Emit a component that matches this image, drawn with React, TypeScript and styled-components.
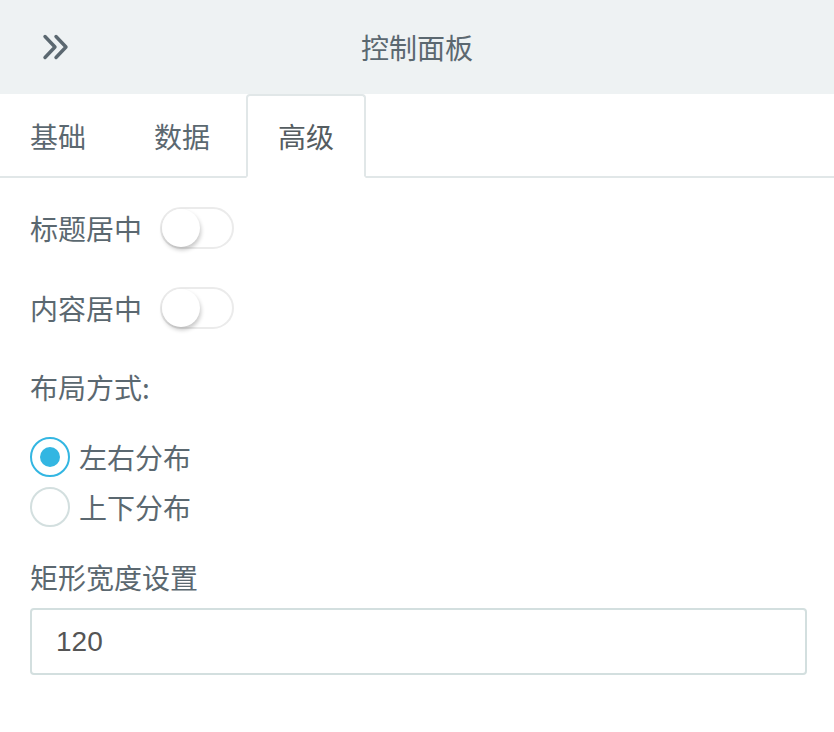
import styled, { createGlobalStyle } from 'styled-components';

const GlobalStyle = createGlobalStyle`
  body {
    margin: 0;
    background: #ffffff;
    font-family: "Noto Sans CJK SC", "Noto Sans", sans-serif;
    color: #5b6870;
  }
`;

const Panel = styled.div`
  width: 834px;
  min-height: 732px;
  background: #ffffff;
`;

const Header = styled.div`
  position: relative;
  height: 94px;
  background: #eef2f3;
  display: flex;
  align-items: center;
  justify-content: center;
`;

const CollapseButton = styled.button`
  position: absolute;
  left: 38px;
  top: 29px;
  width: 36px;
  height: 36px;
  padding: 0;
  border: none;
  background: transparent;
  display: flex;
  align-items: center;
  justify-content: center;
`;

const Title = styled.div`
  font-size: 28px;
  line-height: 1;
  color: #5b6870;
`;

const TabBar = styled.div`
  display: flex;
  height: 82px;
  border-bottom: 2px solid #e1e7e8;
  margin-left: -2px;
`;

const Tab = styled.div<{ $active?: boolean }>`
  box-sizing: border-box;
  height: 84px;
  width: 120px;
  margin-right: 4px;
  display: flex;
  align-items: center;
  justify-content: center;
  font-size: 28px;
  color: ${(p) => (p.$active ? '#555d61' : '#5b6870')};
  border: 2px solid ${(p) => (p.$active ? '#e1e7e8' : 'transparent')};
  border-bottom-color: ${(p) => (p.$active ? '#ffffff' : 'transparent')};
  border-radius: 4px 4px 0 0;
  background: ${(p) => (p.$active ? '#ffffff' : 'transparent')};
`;

const Content = styled.div`
  padding: 29px 27px 0 30px;
  display: flex;
  flex-direction: column;
`;

const SwitchRow = styled.div`
  display: flex;
  align-items: center;
  gap: 18px;
  height: 42px;
  margin-bottom: 38px;
`;

const Label = styled.div<{ $gap?: number }>`
  font-size: 28px;
  line-height: 40px;
  color: #5b6870;
  margin-bottom: ${(p) => p.$gap ?? 0}px;
`;

const Switch = styled.div`
  position: relative;
  box-sizing: border-box;
  width: 74px;
  height: 42px;
  border: 2px solid #ebebeb;
  border-radius: 21px;
  background: #ffffff;
`;

const Knob = styled.div`
  position: absolute;
  left: 0;
  top: 0;
  width: 38px;
  height: 38px;
  border-radius: 50%;
  background: #ffffff;
  box-shadow: 1px 3px 4px rgba(0, 0, 0, 0.22);
`;

const RadioGroup = styled.div`
  display: flex;
  flex-direction: column;
  gap: 10px;
  margin-bottom: 30px;
`;

const RadioRow = styled.label`
  display: flex;
  align-items: center;
  gap: 9px;
  height: 40px;
  font-size: 28px;
  color: #5b6870;
`;

const RadioCircle = styled.span<{ $checked?: boolean }>`
  box-sizing: border-box;
  width: 40px;
  height: 40px;
  border-radius: 50%;
  border: 2px solid ${(p) => (p.$checked ? '#33b6e2' : '#d3dfdf')};
  background: #ffffff;
  display: flex;
  align-items: center;
  justify-content: center;
  &::after {
    content: '';
    display: ${(p) => (p.$checked ? 'block' : 'none')};
    width: 20px;
    height: 20px;
    border-radius: 50%;
    background: #33b6e2;
  }
`;

const Input = styled.input`
  box-sizing: border-box;
  width: 777px;
  height: 67px;
  border: 2px solid #d3dfdf;
  border-radius: 4px;
  padding: 0 24px;
  font-family: "Liberation Sans", Arial, sans-serif;
  font-size: 28px;
  color: #555555;
  outline: none;
`;

const ChevronsIcon = () => (
  <svg width="30" height="26" viewBox="0 0 30 26" fill="none">
    <path
      d="M4 2.5 L14 13 L4 23.5 M15 2.5 L25 13 L15 23.5"
      stroke="#5b6870"
      strokeWidth="3.4"
      strokeLinecap="round"
      strokeLinejoin="round"
    />
  </svg>
);

export default function App() {
  return (
    <Panel>
      <GlobalStyle />
      <Header>
        <CollapseButton>
          <ChevronsIcon />
        </CollapseButton>
        <Title>控制面板</Title>
      </Header>
      <TabBar>
        <Tab>基础</Tab>
        <Tab>数据</Tab>
        <Tab $active>高级</Tab>
      </TabBar>
      <Content>
        <SwitchRow>
          <Label>标题居中</Label>
          <Switch>
            <Knob />
          </Switch>
        </SwitchRow>
        <SwitchRow>
          <Label>内容居中</Label>
          <Switch>
            <Knob />
          </Switch>
        </SwitchRow>
        <Label $gap={30}>布局方式:</Label>
        <RadioGroup>
          <RadioRow>
            <RadioCircle $checked />
            左右分布
          </RadioRow>
          <RadioRow>
            <RadioCircle />
            上下分布
          </RadioRow>
        </RadioGroup>
        <Label $gap={11}>矩形宽度设置</Label>
        <Input defaultValue="120" />
      </Content>
    </Panel>
  );
}
